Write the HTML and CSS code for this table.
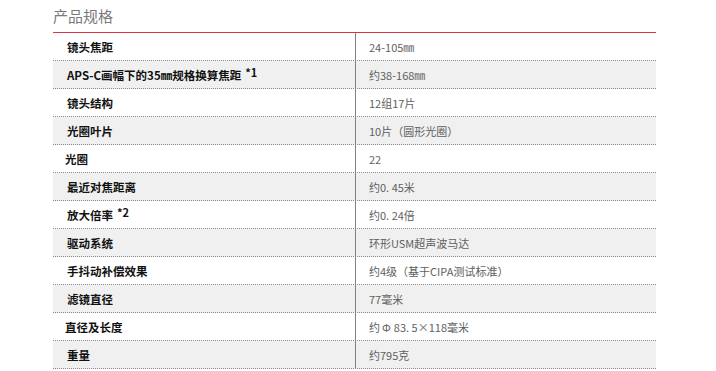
FILE: index.html
```html
<!DOCTYPE html>
<html lang="zh-CN">
<head>
<meta charset="utf-8">
<title>产品规格</title>
<link rel="stylesheet" href="styles.css">
</head>
<body>
<section class="specs">
  <h2 class="specs-title">产品规格</h2>
  <div class="spec-table">
    <div class="spec-row"><div class="spec-key">镜头焦距</div><div class="spec-val">24-105㎜</div></div>
    <div class="spec-row alt"><div class="spec-key">APS-C画幅下的35㎜规格换算焦距 <sup>*1</sup></div><div class="spec-val">约38-168㎜</div></div>
    <div class="spec-row"><div class="spec-key">镜头结构</div><div class="spec-val">12组17片</div></div>
    <div class="spec-row alt"><div class="spec-key">光圈叶片</div><div class="spec-val">10片（圆形光圈）</div></div>
    <div class="spec-row"><div class="spec-key tight">光圈</div><div class="spec-val">22</div></div>
    <div class="spec-row alt"><div class="spec-key">最近对焦距离</div><div class="spec-val">约0. 45米</div></div>
    <div class="spec-row"><div class="spec-key">放大倍率 <sup>*2</sup></div><div class="spec-val">约0. 24倍</div></div>
    <div class="spec-row alt"><div class="spec-key">驱动系统</div><div class="spec-val">环形USM超声波马达</div></div>
    <div class="spec-row"><div class="spec-key">手抖动补偿效果</div><div class="spec-val">约4级（基于CIPA测试标准）</div></div>
    <div class="spec-row alt"><div class="spec-key">滤镜直径</div><div class="spec-val">77毫米</div></div>
    <div class="spec-row"><div class="spec-key tight">直径及长度</div><div class="spec-val">约<span class="phi">Φ</span>83. 5×118毫米</div></div>
    <div class="spec-row alt"><div class="spec-key">重量</div><div class="spec-val">约795克</div></div>
  </div>
</section>
</body>
</html>
```

FILE: styles.css
```css
html, body {
  margin: 0;
  padding: 0;
  background: #ffffff;
}

body {
  font-family: "Noto Sans CJK SC", "Noto Sans", sans-serif;
}

.specs {
  width: 603px;
  margin-left: 53px;
}

.specs-title {
  margin: 0;
  padding: 5px 0 5px;
  height: 22px;
  line-height: 22px;
  font-size: 15px;
  font-weight: normal;
  color: #7a7a7a;
}

.spec-table {
  border-top: 1px solid #d9363e;
}

.spec-row {
  display: flex;
  height: 27px;
  border-bottom: 1px dotted #8a8a8a;
  background: #ffffff;
}

.spec-row.alt {
  background: #f0f0f0;
}

.spec-key {
  flex: 0 0 302px;
  box-sizing: border-box;
  padding-left: 14px;
  display: flex;
  align-items: center;
  font-size: 11.5px;
  font-weight: bold;
  color: #111111;
  white-space: nowrap;
}

.spec-key.tight {
  padding-left: 12px;
}

.spec-key sup {
  font-size: 11px;
  margin-left: 4px;
  position: relative;
  top: -2px;
  vertical-align: top;
  line-height: 1;
}

.spec-val {
  flex: 1;
  border-left: 1px solid #808080;
  padding-left: 13px;
  display: flex;
  align-items: center;
  font-size: 11px;
  color: #606060;
  white-space: pre;
}

.phi {
  margin: 0 3px 0 2px;
}
```
